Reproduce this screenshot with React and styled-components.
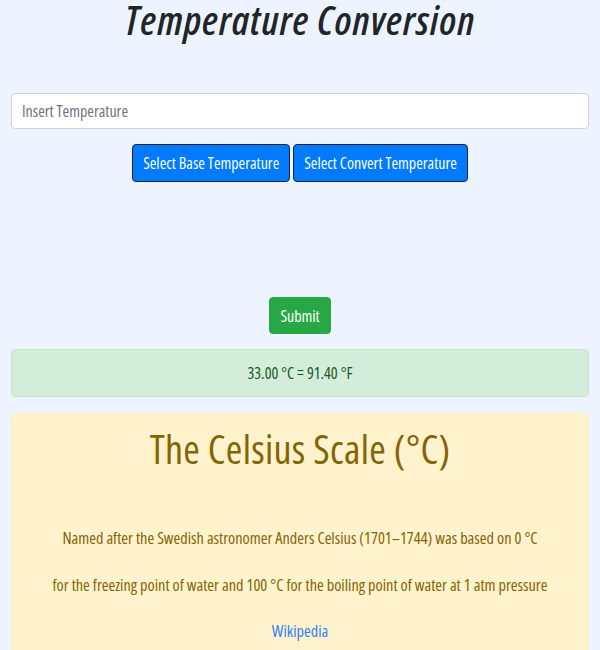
import React from 'react'
import styled, { createGlobalStyle } from 'styled-components'

const GlobalStyle = createGlobalStyle`
  html, body {
    margin: 0;
    padding: 0;
    background: #edf4ff;
  }
  body {
    font-family: "Open Sans", "Noto Sans", sans-serif;
    font-stretch: 75%;
    color: #212529;
  }
`

const Page = styled.div`
  padding: 0 11px;
  height: 650px;
  overflow: hidden;
  text-align: center;
`

const Title = styled.h1`
  margin: 0;
  font-size: 40px;
  line-height: 39px;
  font-style: italic;
  font-weight: 600;
  letter-spacing: 1px;
  color: #212529;
`

const Input = styled.input`
  display: block;
  box-sizing: border-box;
  width: 100%;
  height: 36px;
  margin-top: 54px;
  padding: 0 10px;
  border: 1px solid #ced4da;
  border-radius: 4px;
  background: #fff;
  font-family: inherit;
  font-stretch: inherit;
  font-size: 16px;
  color: #495057;

  &::placeholder {
    color: #6c757d;
  }
`

const ButtonRow = styled.div`
  display: flex;
  justify-content: center;
  gap: 3px;
  margin-top: 15px;
`

const Button = styled.button`
  box-sizing: border-box;
  height: ${({ h }) => h || 38}px;
  padding: 0 10px;
  border: 1px solid ${({ variant }) => (variant === 'success' ? '#28a745' : '#1c2733')};
  border-radius: 4px;
  background: ${({ variant }) => (variant === 'success' ? '#28a745' : '#007bff')};
  color: #fff;
  font-family: inherit;
  font-stretch: inherit;
  font-size: 16px;
  cursor: pointer;
`

const SubmitRow = styled.div`
  display: flex;
  justify-content: center;
  margin-top: 115px;
`

const Alert = styled.div`
  box-sizing: border-box;
  border: 1px solid ${({ variant }) => (variant === 'success' ? '#c3e6cb' : '#ffeeba')};
  border-radius: 4px;
  background: ${({ variant }) => (variant === 'success' ? '#d4edda' : '#fff3cd')};
  color: ${({ variant }) => (variant === 'success' ? '#155724' : '#856404')};
  margin-top: ${({ mt }) => mt}px;
  padding: ${({ variant }) => (variant === 'success' ? '11px 20px' : '11px 20px 40px')};
  font-size: 16px;
  line-height: 24px;
`

const ScaleTitle = styled.h2`
  margin: 0;
  font-size: 40px;
  line-height: 48px;
  font-weight: 500;
  letter-spacing: 0.3px;
`

const Para = styled.p`
  margin: ${({ mt }) => mt}px 0 0;
  font-size: 16.3px;
  line-height: 24px;
`

const Link = styled.a`
  color: #2f80f7;
  text-decoration: none;
`

export default function App() {
  return (
    <>
      <GlobalStyle />
      <Page>
        <Title>Temperature Conversion</Title>
        <Input placeholder="Insert Temperature" />
        <ButtonRow>
          <Button>Select Base Temperature</Button>
          <Button>Select Convert Temperature</Button>
        </ButtonRow>
        <SubmitRow>
          <Button variant="success" h={37}>Submit</Button>
        </SubmitRow>
        <Alert variant="success" mt={15}>33.00 °C = 91.40 °F</Alert>
        <Alert variant="warning" mt={16}>
          <ScaleTitle>The Celsius Scale (°C)</ScaleTitle>
          <Para mt={53}>
            Named after the Swedish astronomer Anders Celsius (1701–1744) was based on 0 °C
          </Para>
          <Para mt={23}>
            for the freezing point of water and 100 °C for the boiling point of water at 1 atm pressure
          </Para>
          <Para mt={22}>
            <Link href="#">Wikipedia</Link>
          </Para>
        </Alert>
      </Page>
    </>
  )
}
